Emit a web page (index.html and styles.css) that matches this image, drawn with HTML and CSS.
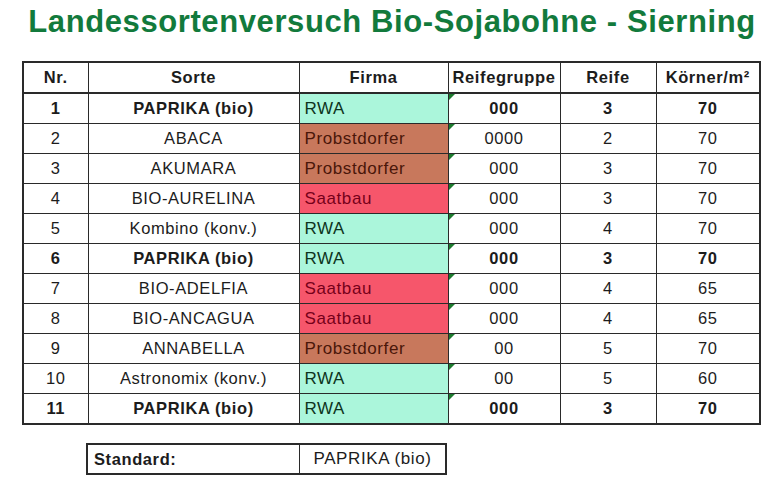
FILE: index.html
```html
<!DOCTYPE html>
<html lang="de">
<head>
<meta charset="utf-8">
<title>Landessortenversuch Bio-Sojabohne - Sierning</title>
<link rel="stylesheet" href="styles.css">
</head>
<body>
<h1 class="title">Landessortenversuch Bio-Sojabohne - Sierning</h1>
<table class="grid">
  <colgroup>
    <col class="c-nr"><col class="c-sorte"><col class="c-firma"><col class="c-rg"><col class="c-reife"><col class="c-koerner">
  </colgroup>
  <thead>
    <tr><th>Nr.</th><th>Sorte</th><th>Firma</th><th>Reifegruppe</th><th>Reife</th><th>Körner/m²</th></tr>
  </thead>
  <tbody>
    <tr class="std"><td>1</td><td>PAPRIKA (bio)</td><td class="firma rwa">RWA</td><td class="rg">000</td><td>3</td><td>70</td></tr>
    <tr><td>2</td><td>ABACA</td><td class="firma probst">Probstdorfer</td><td class="rg">0000</td><td>2</td><td>70</td></tr>
    <tr><td>3</td><td>AKUMARA</td><td class="firma probst">Probstdorfer</td><td class="rg">000</td><td>3</td><td>70</td></tr>
    <tr><td>4</td><td>BIO-AURELINA</td><td class="firma saat">Saatbau</td><td class="rg">000</td><td>3</td><td>70</td></tr>
    <tr><td>5</td><td>Kombino (konv.)</td><td class="firma rwa">RWA</td><td class="rg">000</td><td>4</td><td>70</td></tr>
    <tr class="std"><td>6</td><td>PAPRIKA (bio)</td><td class="firma rwa">RWA</td><td class="rg">000</td><td>3</td><td>70</td></tr>
    <tr><td>7</td><td>BIO-ADELFIA</td><td class="firma saat">Saatbau</td><td class="rg">000</td><td>4</td><td>65</td></tr>
    <tr><td>8</td><td>BIO-ANCAGUA</td><td class="firma saat">Saatbau</td><td class="rg">000</td><td>4</td><td>65</td></tr>
    <tr><td>9</td><td>ANNABELLA</td><td class="firma probst">Probstdorfer</td><td class="rg">00</td><td>5</td><td>70</td></tr>
    <tr><td>10</td><td>Astronomix (konv.)</td><td class="firma rwa">RWA</td><td class="rg">00</td><td>5</td><td>60</td></tr>
    <tr class="std"><td>11</td><td>PAPRIKA (bio)</td><td class="firma rwa">RWA</td><td class="rg">000</td><td>3</td><td>70</td></tr>
  </tbody>
</table>
<table class="standard">
  <tr><td class="s-label">Standard:</td><td class="s-value">PAPRIKA (bio)</td></tr>
</table>
</body>
</html>
```
FILE: styles.css
```css
html, body {
  margin: 0;
  padding: 0;
  background: #ffffff;
}
body {
  font-family: "Liberation Sans", Arial, sans-serif;
  color: #1c1c1c;
  width: 770px;
  height: 480px;
  overflow: hidden;
}
.title {
  margin: 0;
  padding: 4px 0 0 14px;
  height: 61px;
  box-sizing: border-box;
  text-align: center;
  font-size: 31px;
  line-height: 36px;
  letter-spacing: 0.6px;
  font-weight: bold;
  color: #127a3c;
}
.grid {
  margin-left: 22px;
  border-collapse: collapse;
  border: 2px solid #2a2a2a;
  table-layout: fixed;
  width: 737px;
  font-size: 16.5px;
  letter-spacing: 0.6px;
}
.c-nr { width: 65px; }
.c-sorte { width: 211px; }
.c-firma { width: 149px; }
.c-rg { width: 112px; }
.c-reife { width: 96px; }
.c-koerner { width: 104px; }
.grid th, .grid td {
  border: 1px solid #2a2a2a;
  text-align: center;
  padding: 0;
  height: 29px;
  white-space: nowrap;
}
.grid th {
  font-weight: bold;
  height: 29px;
  border-bottom-width: 2px;
}
.grid tr.std td {
  font-weight: bold;
}
.grid td.firma {
  text-align: left;
  padding-left: 5px;
  font-size: 17px;
  letter-spacing: 0.6px;
}
.grid tr.std td.firma { font-weight: normal; }
.rwa { background: #abf6db; color: #0d3320; }
.probst { background: #c8785c; color: #4a1609; }
.saat { background: #f6566b; color: #76001a; }
.grid td.rg { position: relative; }
.grid td.rg::before {
  content: "";
  position: absolute;
  left: 0;
  top: 0;
  width: 0;
  height: 0;
  border-top: 6px solid #1d7a2e;
  border-right: 6px solid transparent;
}
.standard {
  margin: 18px 0 0 86px;
  border-collapse: collapse;
  border: 2px solid #2a2a2a;
  table-layout: fixed;
  width: 361px;
  font-size: 17px;
  letter-spacing: 0.6px;
}
.standard td {
  border: 1px solid #2a2a2a;
  height: 28px;
  padding: 0;
}
.s-label {
  width: 205px;
  font-weight: bold;
  padding-left: 6px !important;
  font-size: 16.5px;
}
.s-value {
  text-align: center;
}
```
